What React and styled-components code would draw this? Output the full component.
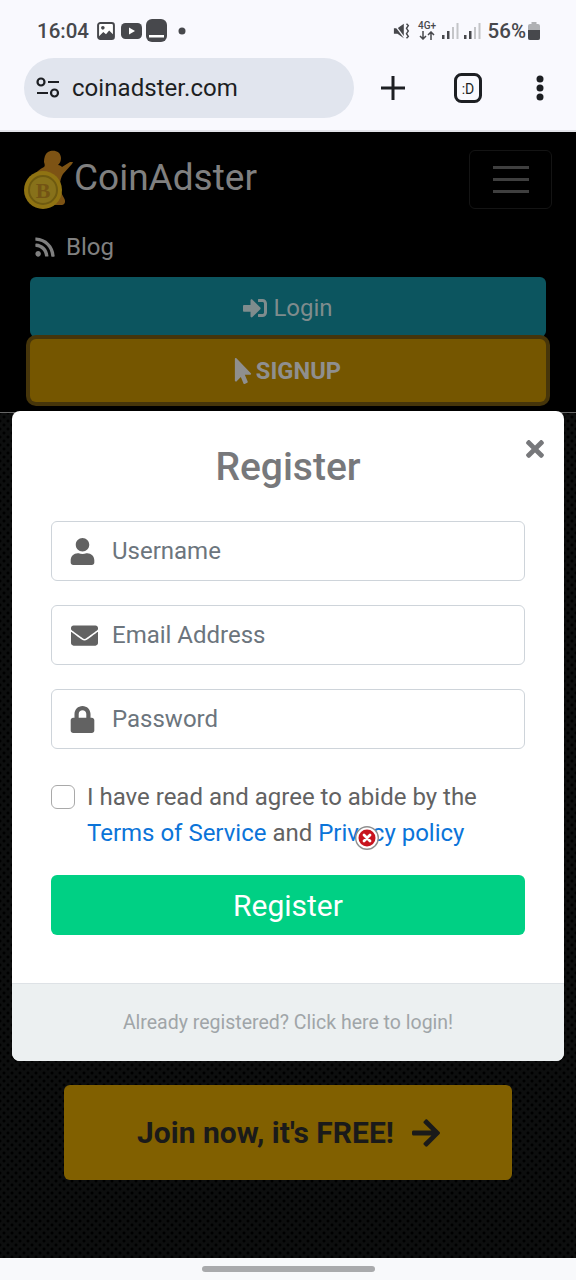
import React from "react";
import styled, { createGlobalStyle } from "styled-components";
import { FaUser, FaEnvelope, FaLock, FaRss, FaSignInAlt, FaMousePointer, FaArrowRight, FaTimes } from "react-icons/fa";

const Global = createGlobalStyle`
  html, body { margin: 0; padding: 0; background: #000; }
  * { box-sizing: border-box; }
  body { font-family: Roboto, "Liberation Sans", sans-serif; }
`;

const Screen = styled.div`
  position: relative;
  width: 576px;
  height: 1280px;
  display: flex;
  flex-direction: column;
  overflow: hidden;
  background: #000;
`;

const Chrome = styled.header`
  height: 130px;
  background: #f9f9fe;
  display: flex;
  flex-direction: column;
`;

const StatusBar = styled.div`
  height: 58px;
  padding: 3px 36px 0 37px;
  display: flex;
  align-items: center;
  justify-content: space-between;
  color: #47484c;
`;

const StatusGroup = styled.div`
  display: flex;
  align-items: center;
`;

const Clock = styled.span`
  font-size: 20.5px;
  font-weight: 500;
  width: 60px;
`;

const Battery = styled.span`
  font-size: 20.5px;
  font-weight: 500;
  margin-left: 7px;
`;

const StatusDot = styled.svg`
  margin-left: 11px;
`;

const AddressRow = styled.div`
  height: 60px;
  padding-left: 24px;
  display: flex;
  align-items: center;
`;

const AddressPill = styled.div`
  width: 330px;
  height: 60px;
  border-radius: 30px;
  background: #e1e5ee;
  display: flex;
  align-items: center;
  padding-left: 12px;
  gap: 12px;
`;

const AddressText = styled.span`
  font-size: 24px;
  letter-spacing: 0.05px;
  color: #1d1f23;
`;

const ChromeAction = styled.div`
  display: flex;
  align-items: center;
  justify-content: center;
  margin-left: ${(p) => p.$left}px;
`;

const Divider = styled.div`
  height: 2px;
  background: #e2e3e8;
`;

const Nav = styled.nav`
  height: 281px;
  background: #000;
  border-bottom: 1px solid #666;
  padding: 18px 24px 0 24px;
  display: flex;
  flex-direction: column;
`;

const BrandRow = styled.div`
  height: 60px;
  display: flex;
  align-items: center;
  justify-content: space-between;
`;

const Brand = styled.div`
  display: flex;
  align-items: center;
`;

const BrandName = styled.span`
  font-size: 37px;
  color: #808080;
  line-height: 1;
  margin-top: -5px;
`;

const Toggler = styled.div`
  width: 83px;
  height: 59px;
  margin-top: -1px;
  border: 1px solid #141414;
  border-radius: 6px;
  display: flex;
  flex-direction: column;
  align-items: center;
  justify-content: center;
  gap: 9px;
`;

const TogglerBar = styled.span`
  width: 36px;
  height: 3px;
  background: #3f3f3f;
`;

const BlogLink = styled.div`
  margin: 18px 0 0 10px;
  height: 38px;
  display: flex;
  align-items: center;
  gap: 10px;
  font-size: 24px;
  color: #808080;
`;

const NavButtons = styled.div`
  margin: 11px 0 0 6px;
  width: 516px;
`;

const LoginButton = styled.div`
  height: 60px;
  padding-top: 2px;
  border-radius: 6px;
  background: #0c555f;
  color: #7f8c8d;
  font-size: 24px;
  display: flex;
  align-items: center;
  justify-content: center;
  gap: 6px;
`;

const SignupButton = styled.div`
  position: relative;
  margin-top: 2px;
  height: 63px;
  padding-right: 5px;
  border-radius: 6px;
  background: #755600;
  box-shadow: 0 0 0 4px #46350a;
  color: #8f8f8f;
  font-size: 23.7px;
  font-weight: 700;
  display: flex;
  align-items: center;
  justify-content: center;
`;

const Hero = styled.main`
  flex: 1;
  background-color: #0d0e0e;
  background-image:
    radial-gradient(circle at center, #000 1.2px, transparent 1.8px),
    radial-gradient(circle at center, #000 1.2px, transparent 1.8px);
  background-size: 8px 8px;
  background-position: 0 0, 4px 4px;
  padding-top: 672px;
  display: flex;
  justify-content: center;
`;

const JoinButton = styled.div`
  width: 448px;
  height: 95px;
  padding-left: 3px;
  border-radius: 6px;
  background: #816000;
  color: #1a1a1a;
  font-size: 30px;
  font-weight: 700;
  display: flex;
  align-items: center;
  justify-content: center;
  gap: 16px;
`;

const HomeBar = styled.footer`
  height: 22px;
  background: #f8f9fb;
  display: flex;
  align-items: center;
  justify-content: center;
`;

const HomeHandle = styled.div`
  width: 173px;
  height: 6px;
  border-radius: 3px;
  background: #a9aaac;
`;

const Modal = styled.section`
  position: absolute;
  left: 12px;
  top: 411px;
  width: 552px;
  height: 650px;
  background: #fff;
  border-radius: 8px;
  display: flex;
  flex-direction: column;
  overflow: hidden;
`;

const ModalBody = styled.div`
  position: relative;
  flex: 1;
  padding: 32px 39px 0;
  display: flex;
  flex-direction: column;
`;

const Title = styled.h2`
  margin: 0 0 29px;
  height: 49px;
  line-height: 49px;
  font-size: 39px;
  font-weight: 500;
  color: #77787b;
  text-align: center;
`;

const Close = styled.div`
  position: absolute;
  right: 16px;
  top: 25px;
  color: #77787b;
  display: flex;
`;

const Field = styled.label`
  height: 60px;
  border: 1px solid #ced4da;
  border-radius: 6px;
  margin-bottom: 24px;
  display: flex;
  align-items: center;
  color: #626262;
`;

const FieldIcon = styled.span`
  width: 60px;
  display: flex;
  justify-content: flex-start;
  padding-left: ${(p) => p.$pad}px;
`;

const FieldInput = styled.input`
  flex: 1;
  min-width: 0;
  border: 0;
  padding: 0;
  outline: 0;
  background: transparent;
  font: 400 24px Roboto, sans-serif;
  color: #495057;
  &::placeholder { color: #6c757d; opacity: 1; }
`;

const Agree = styled.div`
  position: relative;
  display: flex;
  margin-top: 6px;
  gap: 12px;
`;

const Check = styled.span`
  flex: none;
  width: 24px;
  height: 24px;
  margin-top: 6px;
  border: 1px solid #a9a9a9;
  border-radius: 6px;
  background: #fff;
`;

const AgreeText = styled.p`
  margin: 0;
  font-size: 24px;
  line-height: 36px;
  color: #626262;
`;

const TermLink = styled.a`
  color: #0b74d9;
`;

const ErrorBadge = styled.span`
  position: absolute;
  left: 304px;
  top: 47px;
  width: 24px;
  height: 24px;
  display: flex;
`;

const RegisterButton = styled.div`
  margin-top: 24px;
  height: 60px;
  border-radius: 6px;
  background: #00d084;
  color: #fff;
  font-size: 30px;
  display: flex;
  align-items: center;
  justify-content: center;
`;

const ModalFooter = styled.div`
  height: 78px;
  background: #ecf0f1;
  border-top: 1px solid #dee2e6;
  color: #a0a5a8;
  font-size: 19.5px;
  display: flex;
  align-items: center;
  justify-content: center;
`;

const icon = { display: "block" };

const GalleryIcon = () => (
  <svg width="18" height="18" viewBox="0 0 20 20">
    <rect x="1.2" y="1.2" width="17.6" height="17.6" rx="2.5" fill="#fff" stroke="#47484c" strokeWidth="2.200" />
    <circle cx="6.500" cy="6.500" r="2" fill="#47484c" />
    <path d="M2 16l5-5 3 2.500 3.500-4L18 14v4H2z" fill="#47484c" />
  </svg>
);

const VideoIcon = () => (
  <svg width="21" height="16" viewBox="0 0 21 16" style={{ marginLeft: 6 }}>
    <rect width="21" height="16" rx="4.500" fill="#47484c" />
    <path d="M8 4.500l6 3.500-6 3.500z" fill="#fff" />
  </svg>
);

const PanelIcon = () => (
  <svg width="21" height="23" viewBox="0 0 21 23" style={{ marginLeft: 4 }}>
    <rect width="21" height="23" rx="6" fill="#47484c" />
    <rect x="3" y="16" width="15" height="2.500" fill="#fff" />
  </svg>
);

const MuteIcon = () => (
  <svg width="18" height="18" viewBox="0 0 20 20">
    <path d="M1 7h4l7-5v16l-7-5H1z" fill="#47484c" />
    <path d="M1 2l12 16" stroke="#f9f9fe" strokeWidth="1.500" />
    <path d="M15 2l2 2-2 3 2 3-2 3 2 3-2 2" fill="none" stroke="#47484c" strokeWidth="1.600" />
  </svg>
);

const NetLabel = styled.span`
  margin-left: 7px;
  width: 19px;
  display: flex;
  flex-direction: column;
  align-items: center;
  font-size: 10px;
  font-weight: 500;
  line-height: 10px;
  color: #47484c;
`;

const Signal = () => (
  <svg width="17" height="17" viewBox="0 0 17 17" style={{ marginLeft: 5 }}>
    <rect x="0" y="13" width="2.500" height="4" fill="#47484c" />
    <rect x="5" y="9" width="2.500" height="8" fill="#47484c" />
    <rect x="10" y="5" width="2" height="12" fill="#c4c5c8" />
    <rect x="14.500" y="1" width="2" height="16" fill="#c4c5c8" />
  </svg>
);

const BatteryIcon = () => (
  <svg width="12" height="18" viewBox="0 0 12 18" style={{ marginLeft: 2 }}>
    <rect x="3.500" y="0" width="5" height="2.500" fill="#b0b1b4" />
    <rect x="0" y="2" width="12" height="16" rx="2" fill="#b0b1b4" />
    <path d="M0 8h12v8a2 2 0 0 1-2 2H2a2 2 0 0 1-2-2z" fill="#47484c" />
  </svg>
);

const TuneIcon = () => (
  <svg width="24" height="22" viewBox="0 0 24 22" fill="none" stroke="#1d1f23" strokeWidth="2.200">
    <circle cx="5" cy="5" r="3.500" />
    <path d="M12 5h11M1 16h11" />
    <circle cx="18.500" cy="16" r="3.500" />
  </svg>
);

const Logo = () => (
  <svg width="50" height="62" viewBox="0 0 50 62" style={{ display: "block" }}>
    <path d="M24 3c5-3 13-1 13 6 0 3-1 5-3 7 2 0 3 1 4 2l8-5 3 0-1 2-9 10c-2 3-3 7-3 11 0 5 1 8 4 13 2 3 1 7-2 7H28L18 38 8 28c3-4 8-8 12-10 1-1 1-2 0-5 0-4 1-8 4-10z" fill="#7d5314" />
    <circle cx="19" cy="41" r="19" fill="#8f7312" />
    <circle cx="19" cy="41" r="14" fill="#87711a" stroke="#6e5a10" strokeWidth="2" />
    <text x="19" y="49" fontFamily="Liberation Serif, serif" fontSize="22" fontWeight="700" textAnchor="middle" fill="#735414">B</text>
  </svg>
);

const CloseErr = () => (
  <svg width="24" height="24" viewBox="0 0 24 24">
    <circle cx="12" cy="12" r="11.300" fill="#fff" stroke="#8f8f8f" strokeWidth="1.400" />
    <circle cx="12" cy="12" r="8.500" fill="#c8141e" />
    <path d="M9 9l6 6M15 9l-6 6" stroke="#fff" strokeWidth="2.800" strokeLinecap="round" />
  </svg>
);

export default function App() {
  return (
    <Screen>
      <Global />
      <Chrome>
        <StatusBar>
          <StatusGroup>
            <Clock>16:04</Clock>
            <GalleryIcon />
            <VideoIcon />
            <PanelIcon />
            <StatusDot width="8" height="8"><circle cx="4" cy="4" r="3.500" fill="#47484c" /></StatusDot>
          </StatusGroup>
          <StatusGroup>
            <MuteIcon />
            <NetLabel>4G+<svg width="16" height="9" viewBox="0 0 16 9" fill="none" stroke="#47484c" strokeWidth="1.500"><path d="M4 0v8M1 5l3 3 3-3M12 9V1M9 4l3-3 3 3" /></svg></NetLabel>
            <Signal />
            <Signal />
            <Battery>56%</Battery>
            <BatteryIcon />
          </StatusGroup>
        </StatusBar>
        <AddressRow>
          <AddressPill>
            <TuneIcon />
            <AddressText>coinadster.com</AddressText>
          </AddressPill>
          <ChromeAction $left={26}>
            <svg width="26" height="26" viewBox="0 0 26 26" stroke="#1d1f23" strokeWidth="3"><path d="M13 1v24M1 13h24" /></svg>
          </ChromeAction>
          <ChromeAction $left={48}>
            <svg width="28" height="30" viewBox="0 0 28 30">
              <rect x="1.500" y="1.500" width="25" height="27" rx="6" fill="none" stroke="#1d1f23" strokeWidth="3" />
              <text x="14" y="20.500" fontFamily="Roboto, sans-serif" fontSize="14" textAnchor="middle" fill="#1d1f23">:D</text>
            </svg>
          </ChromeAction>
          <ChromeAction $left={54}>
            <svg width="8" height="26" viewBox="0 0 8 26" fill="#1d1f23"><circle cx="4" cy="4" r="3.500" /><circle cx="4" cy="13" r="3.500" /><circle cx="4" cy="22" r="3.500" /></svg>
          </ChromeAction>
        </AddressRow>
      </Chrome>
      <Divider />
      <Nav>
        <BrandRow>
          <Brand>
            <Logo />
            <BrandName>CoinAdster</BrandName>
          </Brand>
          <Toggler>
            <TogglerBar />
            <TogglerBar />
            <TogglerBar />
          </Toggler>
        </BrandRow>
        <BlogLink>
          <FaRss size={22} color="#808080" style={icon} />
          Blog
        </BlogLink>
        <NavButtons>
          <LoginButton>
            <FaSignInAlt size={24} style={icon} />
            Login
          </LoginButton>
          <SignupButton>
            <FaMousePointer size={26} style={icon} />
            SIGNUP
          </SignupButton>
        </NavButtons>
      </Nav>
      <Hero>
        <JoinButton>
          Join now, it's FREE!
          <FaArrowRight size={32} style={icon} />
        </JoinButton>
      </Hero>
      <HomeBar>
        <HomeHandle />
      </HomeBar>
      <Modal>
        <ModalBody>
          <Title>Register</Title>
          <Close>
            <FaTimes size={26} style={icon} />
          </Close>
          <Field>
            <FieldIcon $pad={17}><FaUser size={27} style={icon} /></FieldIcon>
            <FieldInput placeholder="Username" readOnly />
          </Field>
          <Field>
            <FieldIcon $pad={19}><FaEnvelope size={27} style={icon} /></FieldIcon>
            <FieldInput placeholder="Email Address" readOnly />
          </Field>
          <Field>
            <FieldIcon $pad={17}><FaLock size={27} style={icon} /></FieldIcon>
            <FieldInput placeholder="Password" readOnly />
          </Field>
          <Agree>
            <Check />
            <AgreeText>
              I have read and agree to abide by the
              <br />
              <TermLink>Terms of Service</TermLink> and <TermLink>Privacy policy</TermLink>
            </AgreeText>
            <ErrorBadge><CloseErr /></ErrorBadge>
          </Agree>
          <RegisterButton>Register</RegisterButton>
        </ModalBody>
        <ModalFooter>Already registered? Click here to login!</ModalFooter>
      </Modal>
    </Screen>
  );
}
